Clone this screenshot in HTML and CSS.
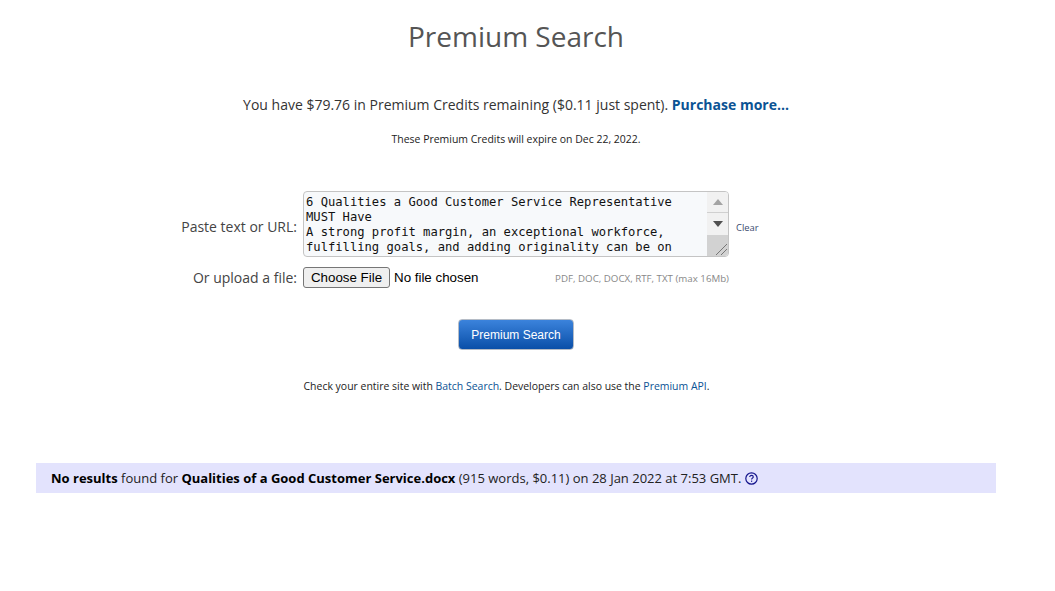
FILE: index.html
```html
<!DOCTYPE html>
<html lang="en">
<head>
    <meta charset="UTF-8">
    <title>Premium Search</title>
    <link rel="stylesheet" href="styles.css">
</head>
<body>

<div class="container">
    <h1>Premium Search</h1>

    <p class="credits">You have $79.76 in Premium Credits remaining ($0.11 just spent). <a href="#" class="purchase">Purchase more...</a></p>
    <p class="expiry">These Premium Credits will expire on Dec 22, 2022.</p>

    <form class="search-form">
        <div class="form-row row-text">
            <label class="form-label" for="query">Paste text or URL:</label>
            <div class="text-box">
                <textarea id="query" spellcheck="false">6 Qualities a Good Customer Service Representative MUST Have
A strong profit margin, an exceptional workforce, fulfilling goals, and adding originality can be on</textarea>
                <div class="scroll-bar">
                    <span class="scroll-btn"><span class="arrow-up"></span></span>
                    <span class="scroll-btn"><span class="arrow-down"></span></span>
                    <span class="scroll-track">
                        <svg class="grip" width="14" height="14" viewBox="0 0 14 14">
                            <path d="M2 13 L13 2 M7 13 L13 7" stroke="#777" stroke-width="1" fill="none"/>
                        </svg>
                    </span>
                </div>
            </div>
            <a href="#" class="clear-link">Clear</a>
        </div>

        <div class="form-row row-file">
            <label class="form-label">Or upload a file:</label>
            <div class="file-box">
                <button type="button" class="file-btn">Choose File</button>
                <span class="file-name">No file chosen</span>
                <span class="file-types">PDF, DOC, DOCX, RTF, TXT (max 16Mb)</span>
            </div>
        </div>

        <div class="submit-row">
            <button type="button" class="search-btn">Premium Search</button>
        </div>
    </form>

    <p class="batch-note">Check your entire site with <a href="#">Batch Search</a>. Developers can also use the <a href="#">Premium API</a>.</p>

    <div class="result-bar">
        <b>No results</b> found for <b>Qualities of a Good Customer Service.docx</b> (915 words, $0.11) on 28 Jan 2022 at 7:53 GMT.
        <svg class="help-icon" width="13" height="13" viewBox="0 0 13 13">
            <circle cx="6.5" cy="6.5" r="5.7" fill="none" stroke="#14148c" stroke-width="1.2"/>
            <path d="M4.7 5.1 C4.7 3.9 5.5 3.4 6.5 3.4 C7.5 3.4 8.3 4 8.3 4.9 C8.3 6 6.6 6 6.6 7.5" fill="none" stroke="#14148c" stroke-width="1.1"/>
            <rect x="6" y="8.6" width="1.2" height="1.2" fill="#14148c"/>
        </svg>
    </div>
</div>

</body>
</html>
```

FILE: styles.css
```css
html {
    box-sizing: border-box;
}
*, *:before, *:after {
    box-sizing: inherit;
}
body {
    margin: 0;
    background: #fff;
    color: #333;
    font-family: "Open Sans", "Noto Sans", Arial, sans-serif;
    font-size: 14px;
}
a {
    color: #0b5394;
    text-decoration: none;
}
.container {
    width: 960px;
    margin-left: 36px;
    text-align: center;
}
h1 {
    margin: 0;
    padding-top: 16px;
    font-size: 28px;
    line-height: 40px;
    font-weight: 400;
    color: #555;
}
.credits {
    margin: 38px 0 0;
    line-height: 22px;
    font-size: 14px;
}
.purchase {
    font-weight: 700;
}
.expiry {
    margin: 16px 0 0;
    font-size: 10.46px;
    line-height: 14px;
    color: #222;
}

/* form */
.search-form {
    margin-top: 45px;
}
.form-row {
    display: flex;
    align-items: center;
}
.form-label {
    width: 261px;
    margin-right: 6px;
    text-align: right;
    color: #444;
    font-size: 14px;
}
.row-text .form-label {
    padding-top: 4px;
}
.text-box {
    display: flex;
    width: 426px;
    height: 66px;
    border: 1px solid #c4c4c4;
    border-radius: 4px;
    overflow: hidden;
    background: #f7f9fb;
}
.text-box textarea {
    flex: 1;
    min-width: 0;
    padding: 3px 2px;
    border: 0;
    outline: 0;
    resize: none;
    overflow: hidden;
    background: transparent;
    color: #111;
    font-family: "DejaVu Sans Mono", "Liberation Mono", monospace;
    font-size: 12.17px;
    line-height: 15px;
}
.scroll-bar {
    display: flex;
    flex-direction: column;
    width: 21px;
    background: #f1f1f1;
}
.scroll-btn {
    display: flex;
    align-items: center;
    justify-content: center;
    height: 21px;
}
.scroll-btn:nth-child(2) {
    height: 22px;
}
.scroll-btn:first-child {
    border-bottom: 1px solid #d0d0d0;
}
.arrow-up {
    border: 5px solid transparent;
    border-top: 0;
    border-bottom: 6px solid #a3a3a3;
}
.arrow-down {
    border: 5px solid transparent;
    border-bottom: 0;
    border-top: 6px solid #505050;
}
.scroll-track {
    flex: 1;
    position: relative;
    background: #d2d2d2;
}
.grip {
    position: absolute;
    right: 0;
    bottom: 0;
}
.clear-link {
    margin-left: 7px;
    padding-top: 6px;
    font-size: 9.4px;
    color: #3a4a70;
}
.row-file {
    margin-top: 10px;
}
.file-box {
    display: flex;
    align-items: center;
    width: 426px;
}
.file-btn {
    height: 21px;
    width: 87px;
    padding: 0;
    border: 1px solid #767676;
    border-radius: 3px;
    background: #efefef;
    color: #000;
    font-family: "Liberation Sans", Arial, sans-serif;
    font-size: 13.33px;
}
.file-name {
    margin-left: 4px;
    color: #000;
    font-family: "Liberation Sans", Arial, sans-serif;
    font-size: 13.33px;
}
.file-types {
    margin-left: auto;
    padding-top: 2px;
    font-size: 9.73px;
    color: #888;
}
.submit-row {
    margin-top: 31px;
}
.search-btn {
    width: 116px;
    height: 31px;
    padding: 0;
    border: 1px solid #b5bcc6;
    border-radius: 4px;
    background: linear-gradient(#3b83dc, #0a4fa8);
    color: #fff;
    font-family: "Liberation Sans", Arial, sans-serif;
    font-size: 12px;
}
.batch-note {
    margin: 29px 0 0;
    padding-right: 19px;
    font-size: 10.46px;
    line-height: 14px;
    color: #222;
}

/* result bar */
.result-bar {
    height: 30px;
    margin-top: 70px;
    padding-left: 15px;
    background: #e3e3fd;
    color: #222;
    font-size: 13px;
    line-height: 30px;
    text-align: left;
}
.result-bar b {
    color: #000;
}
.help-icon {
    margin-left: 0;
    vertical-align: -2px;
}
```
